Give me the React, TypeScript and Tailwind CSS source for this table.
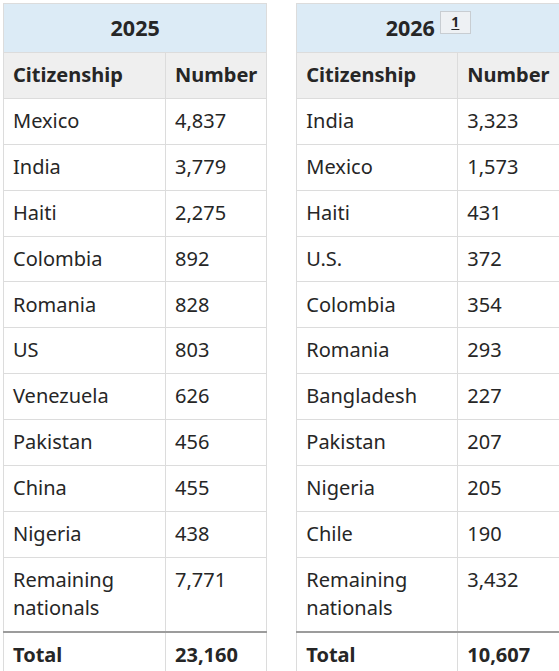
import React from "react";

type Row = [string, string];

const left: Row[] = [
  ["Mexico", "4,837"],
  ["India", "3,779"],
  ["Haiti", "2,275"],
  ["Colombia", "892"],
  ["Romania", "828"],
  ["US", "803"],
  ["Venezuela", "626"],
  ["Pakistan", "456"],
  ["China", "455"],
  ["Nigeria", "438"],
];

const right: Row[] = [
  ["India", "3,323"],
  ["Mexico", "1,573"],
  ["Haiti", "431"],
  ["U.S.", "372"],
  ["Colombia", "354"],
  ["Romania", "293"],
  ["Bangladesh", "227"],
  ["Pakistan", "207"],
  ["Nigeria", "205"],
  ["Chile", "190"],
];

function Table({
  year,
  rows,
  remaining,
  total,
  badge,
  w1,
  w2,
}: {
  year: string;
  rows: Row[];
  remaining: string;
  total: string;
  badge?: boolean;
  w1: string;
  w2: string;
}) {
  const cell = "border border-[#dcdcdc] px-[9px] py-[8.15px] align-top text-left";
  return (
    <table className="shrink-0 border-collapse text-[20px] leading-[28.6px] text-[#262626]">
      <colgroup>
        <col className={w1} />
        <col className={w2} />
      </colgroup>
      <thead>
        <tr>
          <th
            colSpan={2}
            className="h-[49px] border border-[#dcdcdc] bg-[#dcebf6] p-0 text-center align-middle text-[21.5px] font-bold"
          >
            <span className="inline-flex items-center gap-[5px]">
              <span>{year}</span>
              {badge && (
                <span className="relative -top-[6px] flex h-[23px] w-[31px] items-center justify-center border border-[#c8cdd2] bg-[#eef1f4] text-[14px] font-bold leading-none">
                  <span className="underline underline-offset-2">1</span>
                </span>
              )}
            </span>
          </th>
        </tr>
        <tr className="bg-[#efefef]">
          <th className={`${cell} h-[45px] align-middle font-bold`}>Citizenship</th>
          <th className={`${cell} h-[45px] align-middle font-bold`}>Number</th>
        </tr>
      </thead>
      <tbody>
        {rows.map(([c, n]) => (
          <tr key={c}>
            <td className={cell}>{c}</td>
            <td className={cell}>{n}</td>
          </tr>
        ))}
        <tr>
          <td className={cell}>
            Remaining
            <br />
            nationals
          </td>
          <td className={cell}>{remaining}</td>
        </tr>
        <tr>
          <td className={`${cell} border-t-2 border-t-[#9c9c9c] font-bold`}>Total</td>
          <td className={`${cell} border-t-2 border-t-[#9c9c9c] font-bold`}>{total}</td>
        </tr>
      </tbody>
    </table>
  );
}

export default function App() {
  return (
    <div
      className="flex h-[671px] w-[559px] items-start gap-[29px] overflow-hidden bg-white pl-[3px] pt-[3px]"
      style={{ fontFamily: '"Noto Sans", "Open Sans", sans-serif' }}
    >
      <Table
        year="2025"
        rows={left}
        remaining="7,771"
        total="23,160"
        w1="w-[162px]"
        w2="w-[101px]"
      />
      <Table
        year="2026"
        rows={right}
        remaining="3,432"
        total="10,607"
        badge
        w1="w-[161px]"
        w2="w-[102px]"
      />
    </div>
  );
}
